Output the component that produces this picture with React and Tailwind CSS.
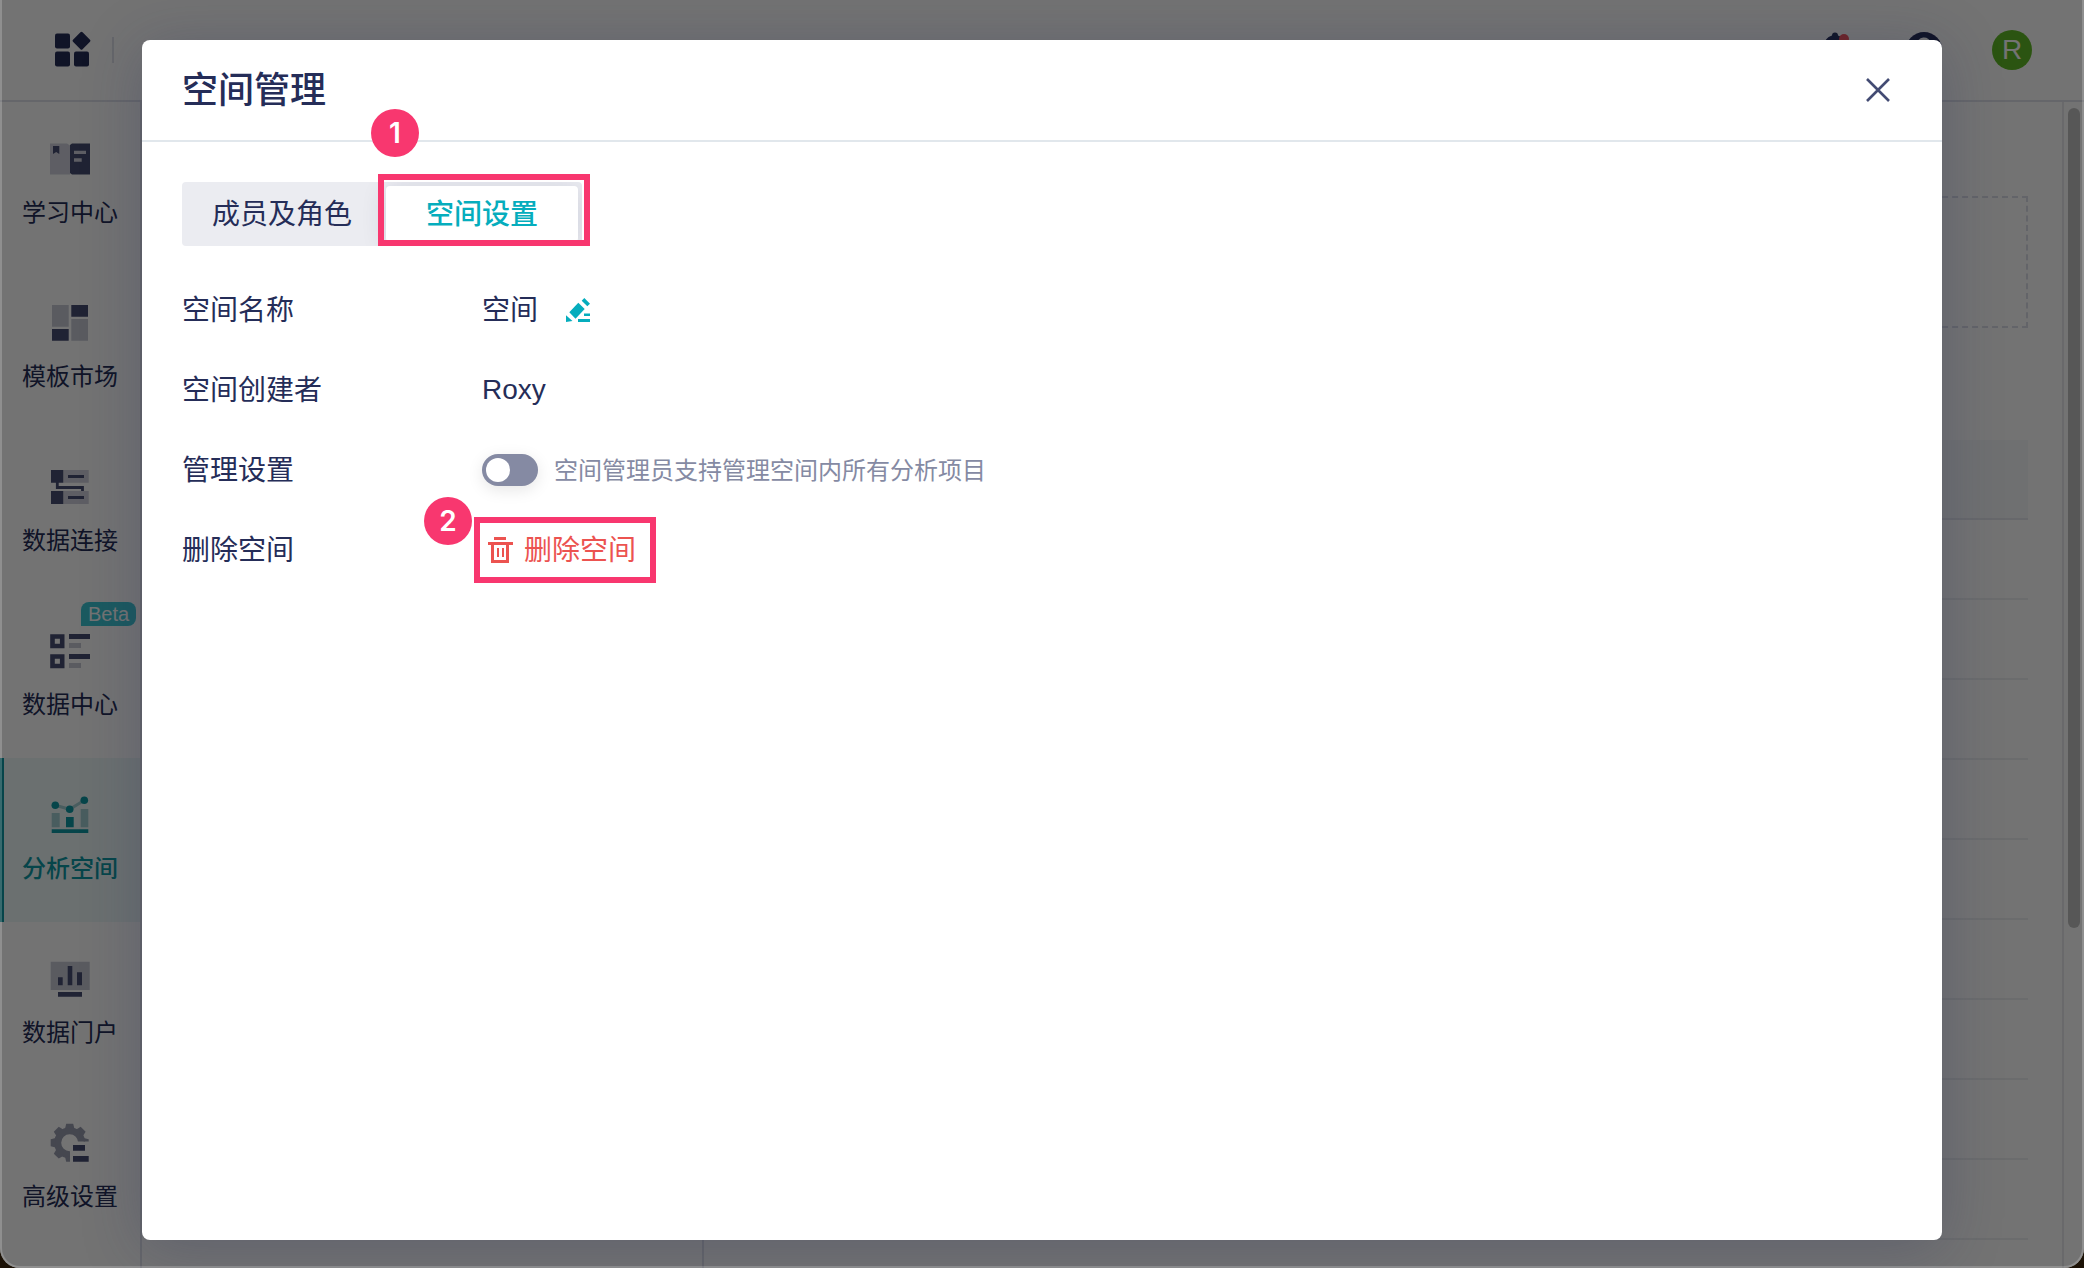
import { useState } from "react";

function BookIcon() {
  return (
    <svg className="size-10" viewBox="0 0 40 40">
      <path d="M0 4.5h17l3 2v29H0z" fill="#d0d1dd" />
      <path d="M3 7h6.3v8L6.2 13 3 15z" fill="#474e73" />
      <path d="M22 4.5h18v31H22l-2-1.5V6z" fill="#474e73" />
      <path d="M24 11.7h12V15H24zM24 19.3h7.7v3.4H24z" fill="#d0d1dd" />
    </svg>
  );
}

function TemplateIcon() {
  return (
    <svg className="size-10" viewBox="0 0 40 40">
      <path d="M2 2h16.7v21.7H2zM21.3 16H38v21.7H21.3z" fill="#c8cad6" />
      <path d="M21.3 2H38v11.7H21.3zM2 26h16.7v11.7H2z" fill="#474e73" />
    </svg>
  );
}

function ConnectIcon() {
  return (
    <svg className="size-10" viewBox="0 0 40 40">
      <path d="M13.3 3h25.4v12.7H13.3zM13.3 24h25.4v13H13.3z" fill="#d0d1dd" />
      <path
        d="M1 3h12.3v12.7H1zM1 24h12.3v13H1zM18 8h16v3H18zM18 29h16v3H18z"
        fill="#474e73"
      />
      <path
        d="M7.3 15v5.5h25.2V24"
        fill="none"
        stroke="#474e73"
        strokeWidth="2.8"
      />
    </svg>
  );
}

function DataCenterIcon() {
  return (
    <svg className="size-10" viewBox="0 0 40 40">
      <path
        d="M2.5 5.500h9.700v9.500H2.500zM2.500 25.500h9.700v9.500H2.500z"
        fill="none"
        stroke="#474e73"
        strokeWidth="4.6"
      />
      <path d="M19 3h21v5H19zM19 23h21v5H19z" fill="#474e73" />
      <path d="M19 12h12v5H19zM19 32h12v5H19z" fill="#c8cad6" />
    </svg>
  );
}

function AnalysisIcon() {
  return (
    <svg className="size-10" viewBox="0 0 40 40">
      <path
        d="M1.7 18h8v14.3h-8zM30.7 14h7.6v18.3h-7.6z"
        fill="#a3cfd3"
      />
      <path
        d="M5.3 10.3l14.4 4 14.6-9"
        fill="none"
        stroke="#a3cfd3"
        strokeWidth="3"
      />
      <path d="M16 22h7.7v10.3H16zM1.7 34.3h36.6V38H1.7z" fill="#0e9aa5" />
      <circle cx="5.3" cy="10.3" r="3.8" fill="#0e9aa5" />
      <circle cx="19.7" cy="14.3" r="3.8" fill="#0e9aa5" />
      <circle cx="34.3" cy="5.3" r="3.8" fill="#0e9aa5" />
    </svg>
  );
}

function PortalIcon() {
  return (
    <svg className="size-10" viewBox="0 0 40 40">
      <path d="M.7 2.7h39V31H.7z" fill="#c8cad6" />
      <path
        d="M8 18.3h4.7v8H8zM17.7 7h4.6v19.3h-4.6zM27 13.3h5v13h-5zM8 33h24v4.7H8z"
        fill="#474e73"
      />
    </svg>
  );
}

function SettingsIcon() {
  return (
    <svg className="size-10" viewBox="0 0 40 40">
      <clipPath id="gear-clip">
        <path d="M0 0h40v18.5H20V40H0z" />
      </clipPath>
      <g clipPath="url(#gear-clip)" fill="#9a9db0">
        <circle
          cx="19.7"
          cy="19.7"
          r="12"
          fill="none"
          stroke="#9a9db0"
          strokeWidth="7"
        />
        {[0, 45, 90, 135, 180, 225, 270, 315].map((deg) => (
          <path
            key={deg}
            d="M16.2.7h7l1.2 5h-9.4z"
            transform={`rotate(${deg} 19.7 19.7)`}
          />
        ))}
      </g>
      <path d="M23 22h12v5.7H23zM23 33h15.7v5.7H23z" fill="#474e73" />
    </svg>
  );
}

function EditIcon() {
  return (
    <svg className="size-6" viewBox="0 0 24 24" fill="#05adbd">
      <path d="M12.3 4.7l6.4 6.3-9.2 9.7-6.2-6.4zM15.7 2.7L18.3 0 24 5.7l-2.7 2.6zM0 17.2L6.5 23 0 24z" />
      <path d="M18 15.5h6V18h-6zM12 21h12v3H12z" />
    </svg>
  );
}

function TrashIcon() {
  return (
    <svg className="size-7" viewBox="0 0 28 28" fill="#ec5350">
      <path d="M8 1h12v3H8zM2 6h25v3H2zM11 12h2v9h-2zM16 12h2v9h-2z" />
      <path
        d="M6.5 8v17.5h15V8"
        fill="none"
        stroke="#ec5350"
        strokeWidth="3"
      />
    </svg>
  );
}

const navItems = [
  { label: "学习中心", icon: BookIcon },
  { label: "模板市场", icon: TemplateIcon },
  { label: "数据连接", icon: ConnectIcon },
  { label: "数据中心", icon: DataCenterIcon, badge: "Beta" },
  { label: "分析空间", icon: AnalysisIcon, active: true },
  { label: "数据门户", icon: PortalIcon },
  { label: "高级设置", icon: SettingsIcon },
];

function TopBar() {
  return (
    <header className="flex h-[102px] shrink-0 items-center justify-between border-b-2 border-[#e1e3ec] pr-[52px] pl-[54px]">
      <div className="flex items-center gap-5">
        <svg className="size-[38px]" viewBox="0 0 38 38" fill="#252d58">
          <rect x="1" y="2.500" width="15" height="15" rx="2" />
          <rect x="1" y="20.500" width="15" height="15" rx="2" />
          <rect x="20" y="20.500" width="15" height="15" rx="2" />
          <rect
            x="20.8"
            y="3"
            width="13.5"
            height="13.5"
            rx="1.5"
            transform="rotate(45 27.5 9.7)"
          />
        </svg>
        <span className="h-[26px] w-[2px] bg-[#e1e3ec]" />
      </div>
      <div className="flex items-center gap-[50px]">
        <svg className="size-[38px]" viewBox="0 0 38 38">
          <path
            d="M19 1.5a3 3 0 0 1 3 3c5 1.500 8 5.500 8 11V27l3 4H5l3-4V15.500c0-5.500 3-9.500 8-11a3 3 0 0 1 3-3z"
            fill="#252d58"
          />
          <circle cx="28" cy="8" r="5" fill="#f5515a" />
        </svg>
        <svg className="size-[38px]" viewBox="0 0 38 38">
          <circle cx="20" cy="19.500" r="18.500" fill="#252d58" />
          <path
            d="M14 14a6 6 0 1 1 8 5.700c-1.500.7-2 1.500-2 4M20 27v3"
            fill="none"
            stroke="#fff"
            strokeWidth="3"
          />
        </svg>
        <button className="size-10 rounded-full bg-[#61bb26] text-[28px] leading-10 text-white">
          R
        </button>
      </div>
    </header>
  );
}

function SideNav() {
  return (
    <nav className="w-[142px] shrink-0 border-r-2 border-[#e1e3ec]">
      {navItems.map(({ label, icon: Icon, badge, active }) => (
        <a
          key={label}
          href="#"
          className={
            active
              ? "relative flex h-[164px] flex-col items-center justify-center gap-4 bg-[#eef8f9] pt-0.5 font-medium text-[#0e9aa5]"
              : "relative flex h-[164px] flex-col items-center justify-center gap-4 pt-0.5 text-[#252d58]"
          }
        >
          {active && (
            <span className="absolute inset-y-0 left-0 w-1 bg-[#0e9aa5]" />
          )}
          {badge && (
            <span className="absolute top-2 right-1 h-6 w-[55px] rounded-lg rounded-bl-none bg-[#3cc8d6] text-center text-xl leading-6 font-normal text-white">
              {badge}
            </span>
          )}
          <Icon />
          <span className="text-2xl leading-9">{label}</span>
        </a>
      ))}
    </nav>
  );
}

function Workspace() {
  return (
    <div className="flex min-w-0 flex-1">
      <div className="w-[562px] shrink-0 border-r-2 border-[#e1e3ec]" />
      <main className="min-w-0 flex-1 overflow-hidden border-r-2 border-[#e8e9ee] pt-[94px] pr-[34px] pl-10">
        <div className="h-[132px] border-2 border-dashed border-[#dcdee8]" />
        <table className="mt-28 w-full border-separate border-spacing-0">
          <thead>
            <tr>
              <th className="h-20 border-b-2 border-[#e4e6ee] bg-[#f7f8fa] p-0" />
            </tr>
          </thead>
          <tbody>
            {Array.from({ length: 10 }).map((_, i) => (
              <tr key={i}>
                <td className="h-20 border-b-2 border-[#eeeff2] p-0" />
              </tr>
            ))}
          </tbody>
        </table>
      </main>
      <div className="w-5 shrink-0 px-1 pt-1.5">
        <div className="h-[820px] rounded-full bg-[#c2c2c2]" />
      </div>
    </div>
  );
}

function Marker({ children, className }) {
  return (
    <span
      className={`absolute flex size-12 items-center justify-center rounded-full bg-[#f8376f] font-['Inter',sans-serif] text-[28px] leading-none font-semibold text-white ${className}`}
    >
      {children}
    </span>
  );
}

function Row({ label, children }) {
  return (
    <div className="flex h-20 items-center">
      <dt className="w-[300px] shrink-0 pt-0.5">{label}</dt>
      <dd className="flex items-center">{children}</dd>
    </div>
  );
}

function SpaceDialog() {
  const [tab, setTab] = useState("settings");
  const [manageAll, setManageAll] = useState(false);

  const activeTab =
    "m-1 h-14 w-48 rounded bg-white pt-0.5 font-medium text-[#05adbd] shadow-[0_4px_24px_rgba(39,46,91,0.16)]";
  const idleTab = "h-16 w-[200px] pt-0.5";

  return (
    <section
      role="dialog"
      aria-labelledby="dialog-title"
      className="w-full max-w-[1800px] rounded-lg bg-white text-[28px] leading-10 text-[#252d58] shadow-[0_8px_60px_rgba(39,46,91,0.28)]"
    >
      <div className="flex h-[102px] items-center justify-between border-b-2 border-[#e1e7ec] px-10">
        <h1 id="dialog-title" className="pt-0.5 text-4xl font-medium">
          空间管理
        </h1>
        <button aria-label="关闭" className="p-3">
          <svg
            className="size-6"
            viewBox="0 0 24 24"
            fill="none"
            stroke="#434b73"
            strokeWidth="2.6"
          >
            <path d="M1 1l22 22M23 1L1 23" />
          </svg>
        </button>
      </div>

      <div className="px-10 pt-10">
        <div className="relative w-fit">
          <div className="flex overflow-hidden rounded bg-[#ebecf1]">
            <button
              className={tab === "members" ? activeTab : idleTab}
              onClick={() => setTab("members")}
            >
              成员及角色
            </button>
            <button
              className={tab === "settings" ? activeTab : idleTab}
              onClick={() => setTab("settings")}
            >
              空间设置
            </button>
          </div>
          <span className="pointer-events-none absolute -top-2 -right-2 h-[72px] w-[212px] border-6 border-[#f8376f]" />
          <Marker className="-top-[73px] left-[189px]">1</Marker>
        </div>

        <dl className="pt-6">
          <Row label="空间名称">
            <span className="pt-0.5">空间</span>
            <button aria-label="编辑空间名称" className="ml-7">
              <EditIcon />
            </button>
          </Row>
          <Row label="空间创建者">Roxy</Row>
          <Row label="管理设置">
            <label className="flex items-center gap-4 text-2xl text-[#858aa3]">
              <input
                type="checkbox"
                role="switch"
                checked={manageAll}
                onChange={(e) => setManageAll(e.target.checked)}
                className="flex h-8 w-14 appearance-none items-center rounded-full bg-[#858aa3] px-1 shadow-[0_4px_16px_rgba(0,0,0,0.1)] before:size-6 before:rounded-full before:bg-white checked:justify-end checked:bg-[#05adbd]"
              />
              <span className="pt-0.5">空间管理员支持管理空间内所有分析项目</span>
            </label>
          </Row>
          <Row label="删除空间">
            <div className="relative">
              <button className="flex items-center gap-2.5 px-1 text-[#ec5350]">
                <TrashIcon />
                <span className="pt-0.5">删除空间</span>
              </button>
              <span className="pointer-events-none absolute -top-3 -left-2 h-[66px] w-[182px] border-6 border-[#f8376f]" />
              <Marker className="-top-8 -left-[58px]">2</Marker>
            </div>
          </Row>
        </dl>
      </div>
    </section>
  );
}

function App() {
  return (
    <div className="bg-[#1c1206] font-['Liberation_Sans','Noto_Sans_CJK_SC',sans-serif]">
      <div className="relative flex h-screen flex-col overflow-hidden rounded-b-[20px] bg-white">
        <TopBar />
        <div className="flex min-h-0 flex-1">
          <SideNav />
          <Workspace />
        </div>
        <div className="absolute inset-0 flex justify-center bg-black/55 pt-10 pb-7">
          <SpaceDialog />
        </div>
        <div className="pointer-events-none absolute inset-0 rounded-b-[20px] border-2 border-t-0 border-white/20" />
      </div>
    </div>
  );
}

export default App;
